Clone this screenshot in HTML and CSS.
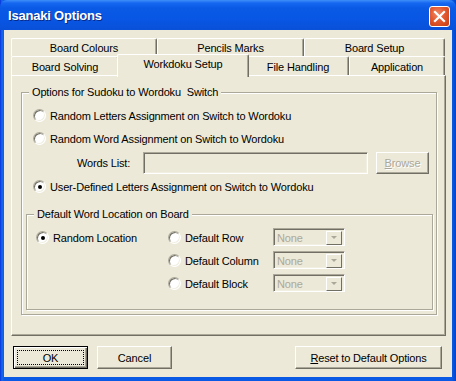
FILE: index.html
```html
<!DOCTYPE html>
<html lang="en">

<head>
    <meta charset="UTF-8">
    <title>Isanaki Options</title>
    <link rel="stylesheet" href="styles.css">
</head>

<body>
    <div class="window">
        <div class="titlebar">
            <span class="title">Isanaki Options</span>
            <span class="close">
                <svg width="13" height="13" viewBox="0 0 13 13">
                    <path d="M2 2 L11 11 M11 2 L2 11" stroke="#fff" stroke-width="2.2" stroke-linecap="square" />
                </svg>
            </span>
        </div>

        <div class="client">
            <div class="tabs">
                <div class="tab-row">
                    <div class="tab w146">Board Colours</div>
                    <div class="tab w147">Pencils Marks</div>
                    <div class="tab w141">Board Setup</div>
                </div>
                <div class="tab-row">
                    <div class="tab w108">Board Solving</div>
                    <div class="tab active w128">Workdoku Setup</div>
                    <div class="tab w102">File Handling</div>
                    <div class="tab w96">Application</div>
                </div>
            </div>

            <div class="panel">
                <div class="group outer">
                    <span class="group-title">Options for Sudoku to Wordoku&nbsp; Switch</span>
                    <div class="option"><span class="radio"></span>Random Letters Assignment on Switch to Wordoku</div>
                    <div class="option"><span class="radio"></span>Random Word Assignment on Switch to Wordoku</div>
                    <div class="words-row">
                        <span class="words-label">Words List:</span>
                        <span class="textbox"></span>
                        <span class="btn browse disabled"><u>B</u>rowse</span>
                    </div>
                    <div class="option"><span class="radio checked"></span>User-Defined Letters Assignment on Switch to Wordoku</div>

                    <div class="group inner">
                        <span class="group-title">Default Word Location on Board</span>
                        <div class="loc-grid">
                            <div class="option"><span class="radio checked"></span>Random Location</div>
                            <div class="option"><span class="radio"></span>Default Row</div>
                            <div class="combo"><span class="combo-text">None</span><span class="combo-btn"></span></div>

                            <div></div>
                            <div class="option"><span class="radio"></span>Default Column</div>
                            <div class="combo"><span class="combo-text">None</span><span class="combo-btn"></span></div>

                            <div></div>
                            <div class="option"><span class="radio"></span>Default Block</div>
                            <div class="combo"><span class="combo-text">None</span><span class="combo-btn"></span></div>
                        </div>
                    </div>
                </div>
            </div>

            <div class="buttons">
                <span class="btn default"><span class="focus">OK</span></span>
                <span class="btn">Cancel</span>
                <span class="spacer"></span>
                <span class="btn reset"><u>R</u>eset to Default Options</span>
            </div>
        </div>
    </div>
</body>

</html>
```

FILE: styles.css
```css
* {
    margin: 0;
    padding: 0;
    box-sizing: border-box;
}

body {
    width: 456px;
    height: 381px;
    overflow: hidden;
    font-family: 'Liberation Sans', Arial, sans-serif;
    font-size: 11px;
    letter-spacing: -0.15px;
    color: #000;
}

.window {
    width: 456px;
    height: 381px;
    display: flex;
    flex-direction: column;
    background: linear-gradient(90deg, #0831d9 0, #166aee 2px, #0a5ae6 4px, #0a5ae6 452px, #0742c8 456px);
}

.titlebar {
    height: 30px;
    display: flex;
    align-items: center;
    justify-content: space-between;
    padding: 0 6px 0 8px;
    background: linear-gradient(#3d8ff8 0, #1667f0 3px, #0a5ae6 8px, #0856e3 20px, #0a50d8 30px);
    border-radius: 7px 7px 0 0;
}

.title {
    color: #fff;
    font-weight: bold;
    font-size: 13px;
    letter-spacing: -0.2px;
    text-shadow: 1px 1px 0 #0a2a88;
    margin-top: 1px;
}

.close {
    width: 21px;
    height: 21px;
    display: flex;
    align-items: center;
    justify-content: center;
    border: 1px solid #fff;
    border-radius: 3px;
    background: radial-gradient(circle at 40% 35%, #f08a6a 0, #e2582f 45%, #c63d12 100%);
    margin-top: 2px;
}

.client {
    flex-grow: 1;
    margin: 0 4px 4px 4px;
    background-color: #ece9d8;
    padding: 8px 6px 0 7px;
    display: flex;
    flex-direction: column;
}

/* tabs */

.tab-row {
    display: flex;
    height: 18px;
}

.tab-row + .tab-row {
    height: 19px;
}

.tab {
    height: 100%;
    display: flex;
    align-items: center;
    justify-content: center;
    background-color: #ece9d8;
    border-top: 1px solid #fff;
    border-left: 1px solid #fff;
    border-right: 1px solid #716f64;
    box-shadow: inset -1px 0 0 #aca899;
    border-radius: 2px 2px 0 0;
    padding-top: 1px;
}

.tab.active {
    position: relative;
    z-index: 2;
    height: 23px;
    margin: -2px -2px -2px -2px;
    width: 132px !important;
    padding-bottom: 6px;
    border-bottom: none;
}

.w146 { width: 146px; }
.w147 { width: 147px; }
.w141 { width: 141px; }
.w108 { width: 108px; }
.w128 { width: 128px; }
.w102 { width: 102px; }
.w96 { width: 96px; }

.panel {
    width: 435px;
    height: 261px;
    border-top: 1px solid #fff;
    border-left: 1px solid #fff;
    border-right: 1px solid #716f64;
    border-bottom: 1px solid #716f64;
    box-shadow: inset -1px -1px 0 #aca899;
    padding: 16px 9px 0 9px;
}

/* group boxes */

.group {
    position: relative;
    border: 1px solid #aca899;
    box-shadow: inset 1px 1px 0 #fff, 1px 1px 0 #fff;
}

.group-title {
    position: absolute;
    top: -8px;
    left: 7px;
    padding: 0 3px;
    background-color: #ece9d8;
    line-height: 14px;
}

.outer {
    width: 416px;
    height: 223px;
    padding: 11px 3px 3px 4px;
}

.inner {
    margin-top: 16px;
    height: 96px;
    padding: 11px 0 0 9px;
}

.option {
    height: 23px;
    display: flex;
    align-items: center;
    padding-left: 7px;
    white-space: nowrap;
}

.radio {
    width: 13px;
    height: 13px;
    border-radius: 50%;
    margin-right: 4px;
    flex-shrink: 0;
    border: 1px solid;
    border-color: #aca899 #fff #fff #aca899;
    box-shadow: inset 1px 1px 0 #716f64, inset -1px -1px 0 #f1efe2;
    background-color: #fff;
    display: flex;
    align-items: center;
    justify-content: center;
}

.radio.checked::after {
    content: "";
    width: 4px;
    height: 4px;
    border-radius: 50%;
    background-color: #000;
}

.words-row {
    height: 25px;
    display: flex;
    align-items: center;
    padding-left: 51px;
}

.words-label {
    width: 66px;
}

.textbox {
    width: 225px;
    height: 22px;
    border: 1px solid;
    border-color: #aca899 #fff #fff #aca899;
    box-shadow: inset 1px 1px 0 #716f64, inset -1px -1px 0 #f1efe2;
    background-color: #ece9d8;
}

.loc-grid {
    display: grid;
    grid-template-columns: 132px 105px 72px;
    grid-auto-rows: 23px;
    align-items: center;
}

.inner .option {
    padding-left: 0;
}

.combo {
    width: 72px;
    height: 18px;
    display: flex;
    border: 1px solid;
    border-color: #aca899 #fff #fff #aca899;
    box-shadow: inset 1px 1px 0 #716f64, inset -1px -1px 0 #f1efe2;
    background-color: #ece9d8;
    padding: 2px;
    margin-top: -2px;
}

.combo-text {
    flex-grow: 1;
    color: #aca899;
    line-height: 14px;
    padding-left: 1px;
}

.combo-btn {
    width: 16px;
    height: 14px;
    display: flex;
    align-items: center;
    justify-content: center;
    border-top: 1px solid #fff;
    border-left: 1px solid #fff;
    border-right: 1px solid #716f64;
    border-bottom: 1px solid #716f64;
}

.combo-btn::after {
    content: "";
    border-left: 3px solid transparent;
    border-right: 3px solid transparent;
    border-top: 3px solid #aca899;
}

/* buttons */

.btn {
    display: flex;
    align-items: center;
    justify-content: center;
    height: 23px;
    background-color: #ece9d8;
    border-top: 1px solid #fff;
    border-left: 1px solid #fff;
    border-right: 1px solid #716f64;
    border-bottom: 1px solid #716f64;
    box-shadow: inset -1px -1px 0 #aca899;
    white-space: nowrap;
}

.btn.disabled {
    color: #aca899;
    text-shadow: 1px 1px 0 #fff;
}

.browse {
    width: 53px;
    height: 22px;
    margin-left: 8px;
}

.buttons {
    display: flex;
    margin-top: 10px;
    padding: 0 4px 0 2px;
}

.buttons .btn {
    width: 75px;
    margin-right: 9px;
}

.btn.default {
    border: 1px solid #000;
    box-shadow: inset 1px 1px 0 #fff, inset -1px -1px 0 #716f64, inset -2px -2px 0 #aca899;
    padding: 3px;
}

.focus {
    width: 100%;
    height: 100%;
    display: flex;
    align-items: center;
    justify-content: center;
    border: 1px dotted #000;
}

.spacer {
    flex-grow: 1;
}

.buttons .btn.reset {
    width: 147px;
    margin-right: 0;
}
```
